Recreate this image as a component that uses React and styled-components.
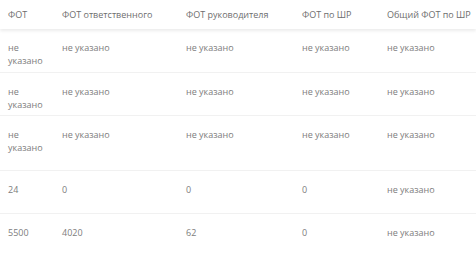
import styled, { createGlobalStyle } from "styled-components";

const GlobalStyle = createGlobalStyle`
  body {
    margin: 0;
    background: #fff;
    font-family: "Open Sans", "Noto Sans", sans-serif;
  }
`;

const columns = [
  { title: "ФОТ", width: 54 },
  { title: "ФОТ ответственного", width: 124 },
  { title: "ФОТ руководителя", width: 116 },
  { title: "ФОТ по ШР", width: 85 },
  { title: "Общий ФОТ по ШР", width: 97 },
];

const NA = "не указано";

const rows = [
  { cells: [NA, NA, NA, NA, NA], height: 43 },
  { cells: [NA, NA, NA, NA, NA], height: 43 },
  { cells: [NA, NA, NA, NA, NA], height: 55 },
  { cells: ["24", "0", "0", "0", NA], height: 43 },
  { cells: ["5500", "4020", "62", "0", NA], height: 43 },
];

export default function App() {
  return (
    <>
      <GlobalStyle />
      <Table>
        <colgroup>
          {columns.map((c) => (
            <col key={c.title} style={{ width: c.width }} />
          ))}
        </colgroup>
        <thead>
          <HeadRow>
            {columns.map((c) => (
              <Th key={c.title}>{c.title}</Th>
            ))}
          </HeadRow>
        </thead>
        <tbody>
          {rows.map((row, i) => (
            <Row key={i} $height={row.height}>
              {row.cells.map((cell, j) => (
                <Td key={j}>{cell}</Td>
              ))}
            </Row>
          ))}
        </tbody>
      </Table>
    </>
  );
}

const Table = styled.table`
  width: 476px;
  table-layout: fixed;
  border-collapse: collapse;
  font-size: 9px;
  color: #7d7d7d;
`;

const HeadRow = styled.tr`
  height: 29px;
  box-shadow: 0 2px 3px rgba(0, 0, 0, 0.08);
`;

const Th = styled.th`
  text-align: left;
  font-weight: 400;
  color: #6e6e6e;
  padding: 0 8px;
  white-space: nowrap;
  vertical-align: middle;
`;

const Row = styled.tr`
  height: ${(p) => p.$height}px;
  border-bottom: 1px solid #f1f1f1;
`;

const Td = styled.td`
  padding: 12px 8px 0;
  vertical-align: top;
  line-height: 13px;
`;
